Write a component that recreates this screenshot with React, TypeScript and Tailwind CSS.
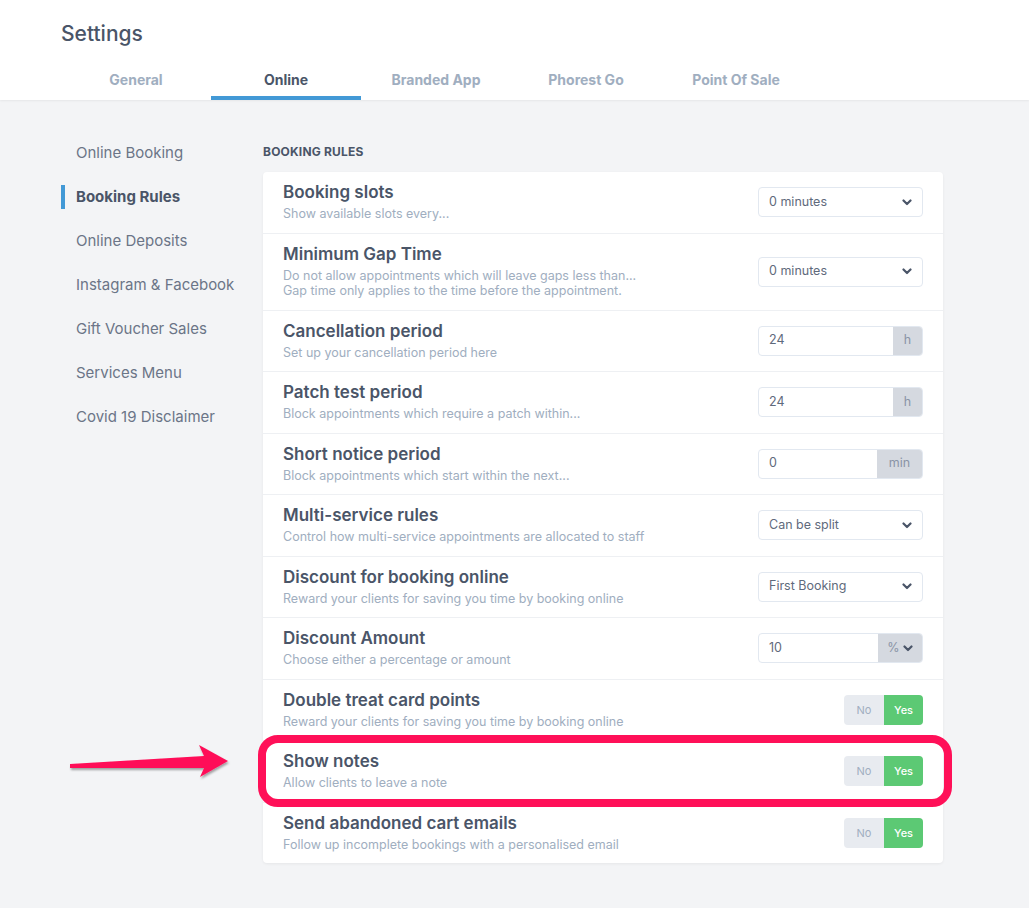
import React from "react";

const font = { fontFamily: "Inter, 'Noto Sans', sans-serif" };

function Chevron({ className = "" }: { className?: string }) {
  return (
    <svg width="10" height="7" viewBox="0 0 10 7" className={className}>
      <path d="M1.5 1.5 L5 5 L8.5 1.5" fill="none" stroke="#4a5568" strokeWidth="2.2" strokeLinecap="round" strokeLinejoin="round" />
    </svg>
  );
}

function Select({ value }: { value: string }) {
  return (
    <div className="w-[165px] h-[30px] border border-[#e2e8f0] rounded-[4px] bg-white flex items-center justify-between pl-[10px] pr-[10px]">
      <span className="text-[12.5px] text-[#5f6a7c]">{value}</span>
      <Chevron />
    </div>
  );
}

function Addon({ value, unit, w, chevron }: { value: string; unit: string; w: string; chevron?: boolean }) {
  return (
    <div className="w-[165px] h-[30px] border border-[#e2e8f0] rounded-[4px] bg-white flex overflow-hidden">
      <div className="flex-1 flex items-center pl-[10px] text-[12.5px] text-[#5f6a7c]">{value}</div>
      <div className={`${w} bg-[#d5d9e0] flex items-center justify-center gap-[3px] text-[12.5px] text-[#8a94a6]`}>
        <span>{unit}</span>
        {chevron && <Chevron />}
      </div>
    </div>
  );
}

function Toggle() {
  return (
    <div className="flex h-[30px] rounded-[4px] overflow-hidden">
      <div className="w-[40px] bg-[#e8ebf0] flex items-center justify-center text-[11px] text-[#a0aec0]">No</div>
      <div className="w-[39px] bg-[#5cc974] flex items-center justify-center text-[11px] font-medium text-white">Yes</div>
    </div>
  );
}

type Row = { title: string; sub: string[]; control: React.ReactNode; highlight?: boolean };

const rows: Row[] = [
  { title: "Booking slots", sub: ["Show available slots every..."], control: <Select value="0 minutes" /> },
  {
    title: "Minimum Gap Time",
    sub: ["Do not allow appointments which will leave gaps less than...", "Gap time only applies to the time before the appointment."],
    control: <Select value="0 minutes" />,
  },
  { title: "Cancellation period", sub: ["Set up your cancellation period here"], control: <Addon value="24" unit="h" w="w-[29px]" /> },
  { title: "Patch test period", sub: ["Block appointments which require a patch within..."], control: <Addon value="24" unit="h" w="w-[29px]" /> },
  { title: "Short notice period", sub: ["Block appointments which start within the next..."], control: <Addon value="0" unit="min" w="w-[45px]" /> },
  { title: "Multi-service rules", sub: ["Control how multi-service appointments are allocated to staff"], control: <Select value="Can be split" /> },
  { title: "Discount for booking online", sub: ["Reward your clients for saving you time by booking online"], control: <Select value="First Booking" /> },
  { title: "Discount Amount", sub: ["Choose either a percentage or amount"], control: <Addon value="10" unit="%" w="w-[44px]" chevron /> },
  { title: "Double treat card points", sub: ["Reward your clients for saving you time by booking online"], control: <Toggle /> },
  { title: "Show notes", sub: ["Allow clients to leave a note"], control: <Toggle />, highlight: true },
  { title: "Send abandoned cart emails", sub: ["Follow up incomplete bookings with a personalised email"], control: <Toggle /> },
];

const tabs = ["General", "Online", "Branded App", "Phorest Go", "Point Of Sale"];
const side = ["Online Booking", "Booking Rules", "Online Deposits", "Instagram & Facebook", "Gift Voucher Sales", "Services Menu", "Covid 19 Disclaimer"];

export default function App() {
  return (
    <div style={font} className="w-[1029px] h-[908px] bg-[#f3f4f6] relative overflow-hidden">
      <div className="bg-white h-[100px] pl-[61px] shadow-[0_1px_2px_rgba(0,0,0,0.06)] relative z-10">
        <div className="pt-[22px] h-[62px] text-[21px] font-medium text-[#4a5568] leading-[24px]">Settings</div>
        <div className="flex">
          {tabs.map((t, i) => (
            <div
              key={t}
              className={`w-[150px] h-[38px] flex items-start justify-center pt-[7px] text-[14px] font-bold ${
                i === 1 ? "text-[#4a5568] border-b-4 border-[#4299d6]" : "text-[#a0aec0]"
              }`}
            >
              {t}
            </div>
          ))}
        </div>
      </div>

      <div className="flex pl-[61px]">
        <div className="w-[202px] pt-[31px]">
          {side.map((s, i) => (
            <div key={s} className="h-[44px] flex items-center">
              <div className={`w-[4px] h-[24px] ${i === 1 ? "bg-[#4299d6]" : ""}`} />
              <span className={`pl-[11px] text-[15px] ${i === 1 ? "font-bold text-[#4a5568]" : "text-[#6b7587]"}`}>{s}</span>
            </div>
          ))}
        </div>
        <div className="w-[680px]">
          <div className="h-[72px] pt-[42px] text-[12px] font-bold text-[#4a5568] tracking-[0.2px] leading-[20px]">BOOKING RULES</div>
          <div className="bg-white rounded-[4px] shadow-[0_1px_3px_rgba(0,0,0,0.06)]">
            {rows.map((r, i) => (
              <div
                key={r.title}
                className={`relative flex items-center justify-between pl-[20px] pr-[20px] ${i < rows.length - 1 ? "border-b border-[#eef0f3]" : ""}`}
              >
                <div className="pt-[9px] pb-[11px]">
                  <div className="text-[17px] font-semibold text-[#4a5568] leading-[23px]">{r.title}</div>
                  <div className="mt-[2px]">
                    {r.sub.map((s) => (
                      <div key={s} className="text-[12.5px] text-[#a0aec0] leading-[15.5px]">{s}</div>
                    ))}
                  </div>
                </div>
                {r.control}
                {r.highlight && (
                  <div className="absolute left-[-5px] right-[-9px] top-[-6px] bottom-[-5px] border-[8px] border-[#ff1058] rounded-[20px] pointer-events-none" />
                )}
              </div>
            ))}
          </div>
        </div>
      </div>

      <svg className="absolute left-0 top-0 pointer-events-none" width="260" height="800" viewBox="0 0 260 800">
        <defs>
          <filter id="sh" x="-10%" y="-50%" width="120%" height="200%">
            <feDropShadow dx="1" dy="2" stdDeviation="1.2" floodColor="#000" floodOpacity="0.35" />
          </filter>
        </defs>
        <path d="M70 764 L204 756 L199 745 L228 761 L200 777 L204 768 L70 768 Z" fill="#ff1058" filter="url(#sh)" />
      </svg>
    </div>
  );
}
